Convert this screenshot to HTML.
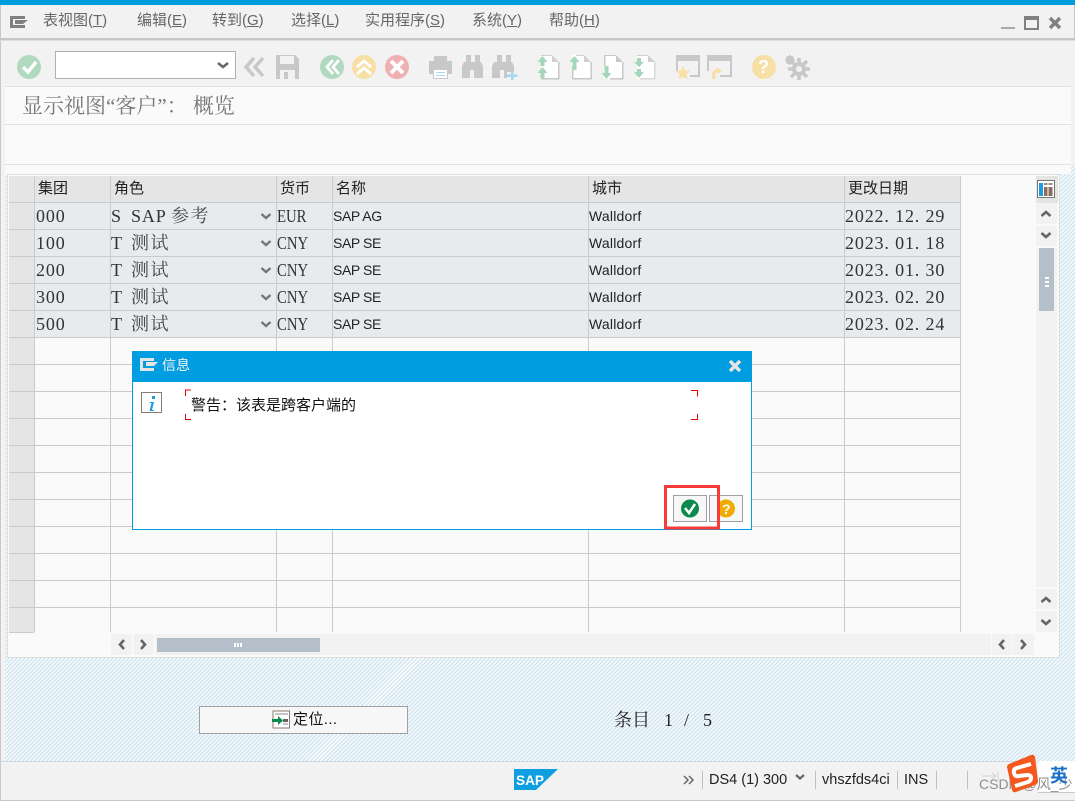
<!DOCTYPE html>
<html><head><meta charset="utf-8"><style>
html,body{margin:0;padding:0;background:#f2f2f2}
#p{position:relative;width:1075px;height:801px;overflow:hidden;background:#f2f2f2;font-family:"Liberation Sans","Noto Sans CJK SC",sans-serif}
.a{position:absolute}
.t{position:absolute;white-space:pre;line-height:20px}
.m{font:15px/20px "Liberation Sans","WenQuanYi Zen Hei","Noto Sans CJK SC",sans-serif;color:#666;top:11px}
.m u{text-decoration:underline}
.h{font:15px/20px "Liberation Sans","Noto Sans CJK SC",sans-serif;color:#222;top:179px}
.s{font:18px/20px "Liberation Serif","Noto Serif CJK SC",serif;color:#333;letter-spacing:.85px}
.c{font:18px/20px "Liberation Serif","Noto Serif CJK SC",serif;color:#333;left:277px;transform:scaleX(.82);transform-origin:left center}
.z{font:18px/20px "Liberation Serif","Noto Serif CJK SC",serif;color:#444;letter-spacing:1.5px;left:131px}
.l{font:14px/20px "Liberation Sans",sans-serif;color:#222;left:333px;letter-spacing:-.4px}
.w{font:14px/20px "Liberation Sans",sans-serif;color:#222;left:589px;letter-spacing:.2px}
.st{font:14.500px/20px "Liberation Sans",sans-serif;color:#222;top:770px}
svg{position:absolute;left:0;top:0}
</style></head><body><div id="p">
<div class="a" style="left:0;top:0;width:1075px;height:5px;background:#009de0"></div>
<div class="a" style="left:0;top:5px;width:1px;height:796px;background:#c8c8c8"></div>
<div class="a" style="left:1074px;top:5px;width:1px;height:36px;background:#c8c8c8"></div>
<div class="a" style="left:0;top:38px;width:1075px;height:2px;background:#c6c6c6"></div>
<div class="a" style="left:0;top:40px;width:1075px;height:1px;background:#dedede"></div>
<div class="a" style="left:5px;top:86px;width:1066px;height:79px;background:#fafafa;border-top:1px solid #e2e2e2;border-bottom:1px solid #e2e2e2;box-sizing:border-box"></div>
<div class="a" style="left:5px;top:124px;width:1066px;height:1px;background:#e2e2e2"></div>
<div class="a" style="left:5px;top:165px;width:1070px;height:596px;background:repeating-linear-gradient(135deg,#cfe6f5 0,#cfe6f5 1.41px,#fafafa 1.41px,#fafafa 2.83px)"></div>
<div class="a" style="left:5px;top:165px;width:1066px;height:9px;background:#fafafa"></div>
<div class="a" style="left:7px;top:174px;width:1053px;height:484px;background:#fafafa;border:1px solid #dedede;box-sizing:border-box"></div>
<div class="a" style="left:0;top:761px;width:1075px;height:1px;background:#cfd8de"></div>
<div class="a" style="left:0;top:800px;width:1075px;height:1px;background:#c8c8c8"></div>

<div class="a" style="left:9px;top:176px;width:951px;height:26px;background:#e5e5e5"></div>
<div class="a" style="left:9px;top:203px;width:25px;height:429px;background:#e5e5e5"></div>
<div class="a" style="left:35px;top:203px;width:925px;height:134px;background:#e8ebee"></div>

<svg width="1075" height="801" viewBox="0 0 1075 801">
<g stroke="#cbcbcb" stroke-width="1" shape-rendering="crispEdges">
<path d="M9 202.5H961M9 229.5H961M9 256.5H961M9 283.5H961M9 310.5H961M9 337.5H961M9 364.5H961M9 391.5H961M9 418.5H961M9 445.5H961M9 472.5H961M9 499.5H961M9 526.5H961M9 553.5H961M9 580.5H961M9 607.5H961"/>
<path d="M34.5 176V632M110.5 176V632M276.5 176V632M332.5 176V632M588.5 176V632M844.5 176V632M960.5 176V632"/>
<path d="M9 632.5H34"/>
</g>
<rect x="1036" y="176" width="21" height="456" fill="#f2f2f2"/>
<rect x="1036" y="176" width="22" height="27" fill="#e4e4e4"/>
<rect x="1037.500" y="180.500" width="17" height="17" fill="#fff" stroke="#777"/>
<path d="M1039 183h4v13h-4z" fill="#1b9be0"/><path d="M1044 187h3.500v9h-3.500zM1048.500 187h4v9h-4z" fill="#8a6d5f"/>
<path d="M1044 183h3.500v2h-3.500zM1048.500 183h4v2h-4z" fill="#a08a7c"/>
<path d="M1036 225h21M1036 247h21" stroke="#fafafa" stroke-width="2"/>
<rect x="1039" y="248" width="15" height="63" fill="#b5bfca"/>
<path d="M1045 277h4v2h-4zM1045 281h4v2h-4zM1045 285h4v2h-4z" fill="#fff"/>
<path d="M1036 588h21M1036 610h21" stroke="#fafafa" stroke-width="2"/>
<g fill="none" stroke="#666" stroke-width="2.600">
<path d="M1041.500 216l4.500-4 4.500 4M1041.500 233l4.500 4 4.500-4M1041.500 602l4.500-4 4.500 4M1041.500 620l4.500 4 4.500-4"/>
</g>
<rect x="111" y="634" width="880" height="21" fill="#f2f2f2"/>
<path d="M132.500 634v21M154.500 634v21" stroke="#fafafa" stroke-width="2"/>
<rect x="992" y="634" width="20" height="21" fill="#f2f2f2"/><rect x="1013" y="634" width="21" height="21" fill="#f2f2f2"/>
<g fill="none" stroke="#666" stroke-width="2.600">
<path d="M124 640l-4 4.500 4 4.500M141 640l4 4.500-4 4.500M1004 640l-4 4.500 4 4.500M1021 640l4 4.500-4 4.500"/>
</g>
<rect x="157" y="638" width="163" height="14" fill="#b5bfca"/>
<path d="M234 643h2v4h-2zM237 643h2v4h-2zM240 643h2v4h-2z" fill="#fff"/>
<g fill="none" stroke="#777" stroke-width="2.400">
<path d="M261.500 214l4.500 4 4.500-4M261.500 241l4.500 4 4.500-4M261.500 268l4.500 4 4.500-4M261.500 295l4.500 4 4.500-4M261.500 322l4.500 4 4.500-4"/></g>

<path d="M10 16h15v3H13v6h12v3H10z" fill="#808080"/><path d="M15 20h13l-5 4h-8z" fill="#808080"/>
<path d="M1001 27h14v2h-14z" fill="#aaa"/>
<rect x="1025" y="17" width="13" height="12" fill="none" stroke="#808080" stroke-width="2"/><rect x="1025" y="16" width="13" height="4" fill="#808080"/>
<path d="M1050 18l10 10M1060 18l-10 10" stroke="#808080" stroke-width="3.400" fill="none"/>

<circle cx="29" cy="67" r="12" fill="#b0d9c0"/><path d="M23 67l5 5 8-10" fill="none" stroke="#fff" stroke-width="3.500"/>
<rect x="55.500" y="51.500" width="180" height="27" fill="#fff" stroke="#b0b0b0"/>
<path d="M218 63l5 4 5-4" fill="none" stroke="#666" stroke-width="2.500"/>
<path d="M254 58l-8 9 8 9M263 58l-8 9 8 9" fill="none" stroke="#c8c8c8" stroke-width="3.500"/>
<path d="M276 55h19l4 4v20h-23z" fill="#c8c8c8"/><rect x="280" y="56" width="14" height="8" fill="#f2f2f2"/><rect x="280" y="70" width="15" height="9" fill="#f2f2f2"/><rect x="284" y="72" width="4" height="7" fill="#c8c8c8"/>
<circle cx="332" cy="67" r="12" fill="#b0d9c0"/><path d="M333 60l-6 7 6 7M339 60l-6 7 6 7" fill="none" stroke="#fff" stroke-width="2.800"/>
<circle cx="364" cy="67" r="12" fill="#f8dfa6"/><path d="M357 67l7-6 7 6M357 74l7-6 7 6" fill="none" stroke="#fff" stroke-width="2.800"/>
<circle cx="397" cy="67" r="12" fill="#eeb0b0"/><path d="M391 61l12 12M403 61l-12 12" fill="none" stroke="#fff" stroke-width="4"/>
<path d="M434 56h13v5h-13zM429 61h23v13h-5v-4h-13v4h-5z" fill="#c8c8c8"/><rect x="433.500" y="69.500" width="14" height="9" fill="#fff" stroke="#c8c8c8"/><path d="M436 72.500h9M436 75.500h9" stroke="#a8d8f0"/><path d="M446 63h5v2h-5z" fill="#a8d8f0"/>
<path d="M466 55h5v7h4v-7h5v7h1l2 4v12h-9v-8h-4v8h-8V66l2-4h2z" fill="#c8c8c8"/>
<path d="M497 55h5v7h4v-7h5v7h1l2 4v6h-7v6h-3v-8h-4v8h-8V66l2-4h3z" fill="#c8c8c8"/>
<path d="M511 71h2.500v3.500h4v2.500h-4v3h-2.500v-3h-4v-2.500h4z" fill="#a8d8f0"/>

<path d="M541 55h11l7 7v17h-18z" fill="#fff"/><path d="M541 55h11v1h-11zM552 55l7 7h-7z" fill="#d0d0d0"/><path d="M558 62h1.500v17.500H541V78h17z" fill="#c8c8c8"/>
<path d="M572 55h12l7 7v17h-19z" fill="#fff"/><path d="M584 55l7 7h-7z" fill="#d0d0d0"/><path d="M572 66h1.500v12h17V62h1.500v17.500h-20z" fill="#c8c8c8"/><path d="M576 55h8v1h-8z" fill="#d0d0d0"/>
<path d="M604 55h12l7 7v17h-19z" fill="#fff"/><path d="M604 55h12v1h-10.500v10H604zM616 55l7 7h-7z" fill="#c8c8c8"/><path d="M622 62h1.500v17.500H610V78h12z" fill="#c8c8c8"/>
<path d="M637 55h11l7 7v17h-18z" fill="#fff"/><path d="M637 55h11v1h-11zM648 55l7 7h-7z" fill="#d0d0d0"/><path d="M654 62h1.500v17.500H640V78h14z" fill="#d8d8d8"/>
<path d="M542.500 56l5 6h-3v4h-4v-4h-3zM542.500 67l5 6h-3v5h-4v-5h-3zM574.500 56l5 6h-3v8h-4v-8h-3zM606.500 79l5-6h-3v-7h-4v7h-3zM637 58h4v4h3l-5 5-5-5h3zM637 69h4v3h3l-5 6-5-6h3z" fill="#a5d6ba"/>
<rect x="676" y="55" width="24" height="6" fill="#c8c8c8"/><path d="M676 55h2v16h-2zM690 77h10V58h-2v17h-8z" fill="#c8c8c8"/>
<path d="M683 66l2 4.500 5 .5-3.700 3.300 1 5-4.300-2.500-4.300 2.500 1-5-3.700-3.300 5-.5z" fill="#f8dfa6"/>
<rect x="707" y="55" width="25" height="6" fill="#c8c8c8"/><path d="M707 55h2v16h-2zM720 77h12V58h-2v17h-10z" fill="#c8c8c8"/>
<path d="M712 79c-1-6 1-10 5-10v-2l5 4-5 3v-2c-2 0-2 3-1 7z" fill="#f8dfa6"/>
<circle cx="764" cy="67" r="12" fill="#f8dfa6"/>
<path d="M799 58v22M788 69h22M791 61l16 16M807 61l-16 16" stroke="#c8c8c8" stroke-width="3.500"/><circle cx="799" cy="69" r="7" fill="#c8c8c8"/><circle cx="799" cy="69" r="3" fill="#f2f2f2"/>
<circle cx="790" cy="60" r="3" fill="none" stroke="#c8c8c8" stroke-width="2.500"/><path d="M790 55v10M785 60h10M786.500 56.500l7 7M793.500 56.500l-7 7" stroke="#c8c8c8" stroke-width="1.500"/>
</svg>

<span class="t m" style="left:43px">表视图(<u>T</u>)</span>
<span class="t m" style="left:137px">编辑(<u>E</u>)</span>
<span class="t m" style="left:212px">转到(<u>G</u>)</span>
<span class="t m" style="left:291px">选择(<u>L</u>)</span>
<span class="t m" style="left:365px">实用程序(<u>S</u>)</span>
<span class="t m" style="left:472px">系统(<u>Y</u>)</span>
<span class="t m" style="left:549px">帮助(<u>H</u>)</span>
<span class="t" style="left:22px;top:95px;font:21px/22px 'Liberation Serif','Noto Serif CJK SC',serif;color:#777">显示视图“客户”： 概览</span>
<span class="t" style="left:758px;top:57px;font:bold 18px/20px 'Liberation Sans',sans-serif;color:#fff">?</span>

<span class="t h" style="left:38px">集团</span>
<span class="t h" style="left:114px">角色</span>
<span class="t h" style="left:280px">货币</span>
<span class="t h" style="left:336px">名称</span>
<span class="t h" style="left:592px">城市</span>
<span class="t h" style="left:848px">更改日期</span>

<span class="t s" style="left:36px;top:206px">000</span><span class="t s" style="left:111px;top:206px">S</span><span class="t s" style="left:131px;top:206px">SAP</span><span class="t z" style="left:171px;top:206px">参考</span><span class="t c" style="top:206px">EUR</span><span class="t l" style="top:206px">SAP AG</span><span class="t w" style="top:206px">Walldorf</span><span class="t s" style="left:845px;top:206px">2022. 12. 29</span>
<span class="t s" style="left:36px;top:233px">100</span><span class="t s" style="left:111px;top:233px">T</span><span class="t z" style="top:233px">测试</span><span class="t c" style="top:233px">CNY</span><span class="t l" style="top:233px">SAP SE</span><span class="t w" style="top:233px">Walldorf</span><span class="t s" style="left:845px;top:233px">2023. 01. 18</span>
<span class="t s" style="left:36px;top:260px">200</span><span class="t s" style="left:111px;top:260px">T</span><span class="t z" style="top:260px">测试</span><span class="t c" style="top:260px">CNY</span><span class="t l" style="top:260px">SAP SE</span><span class="t w" style="top:260px">Walldorf</span><span class="t s" style="left:845px;top:260px">2023. 01. 30</span>
<span class="t s" style="left:36px;top:287px">300</span><span class="t s" style="left:111px;top:287px">T</span><span class="t z" style="top:287px">测试</span><span class="t c" style="top:287px">CNY</span><span class="t l" style="top:287px">SAP SE</span><span class="t w" style="top:287px">Walldorf</span><span class="t s" style="left:845px;top:287px">2023. 02. 20</span>
<span class="t s" style="left:36px;top:314px">500</span><span class="t s" style="left:111px;top:314px">T</span><span class="t z" style="top:314px">测试</span><span class="t c" style="top:314px">CNY</span><span class="t l" style="top:314px">SAP SE</span><span class="t w" style="top:314px">Walldorf</span><span class="t s" style="left:845px;top:314px">2023. 02. 24</span>

<div class="a" style="left:132px;top:351px;width:620px;height:179px;background:#fff;border:1px solid #009de0;box-sizing:border-box"></div>
<div class="a" style="left:132px;top:351px;width:620px;height:31px;background:#009de0"></div>
<span class="t" style="left:162px;top:355px;font:14px/20px 'Liberation Sans','Noto Sans CJK SC',sans-serif;color:#f2f2f2">信息</span>
<span class="t" style="left:191px;top:396px;font:15px/20px 'Liberation Sans','Noto Sans CJK SC',sans-serif;color:#111">警告：该表是跨客户端的</span>
<div class="a" style="left:199px;top:706px;width:209px;height:28px;background:#f7f7f7;border:1px solid #a0a0a0;box-sizing:border-box"></div>
<span class="t" style="left:293px;top:710px;font:15px/20px 'Liberation Sans','Noto Sans CJK SC',sans-serif;color:#111;letter-spacing:.4px">定位...</span>
<span class="t" style="left:614px;top:710px;font:18px/20px 'Liberation Serif','Noto Serif CJK SC',serif;color:#222">条目</span>
<span class="t" style="left:664px;top:710px;font:18px/20px 'Liberation Serif',serif;color:#222">1</span>
<span class="t" style="left:684px;top:710px;font:18px/20px 'Liberation Serif',serif;color:#222">/</span>
<span class="t" style="left:703px;top:710px;font:18px/20px 'Liberation Serif',serif;color:#222">5</span>

<svg width="1075" height="801" viewBox="0 0 1075 801">
<path d="M140 358h14v3h-11v7h11v3h-14z" fill="#e4e4e4"/><path d="M146 362h12l-4 4h-8z" fill="#e4e4e4"/>
<path d="M730 361l10 10M740 361l-10 10" stroke="#e4e4e4" stroke-width="3.500" fill="none"/>
<rect x="141.500" y="392.500" width="20" height="20" fill="#fff" stroke="#8a7a70"/>
<path d="M152 396h3v3h-3zM150 402h4l-2 8h2l-.5 1h-4l2-8h-2z" fill="#1b9be0"/>
<g fill="none" stroke="#e00000" stroke-width="1" shape-rendering="crispEdges">
<path d="M185.500 396v-6H191M185.500 414v5.500H191"/><path d="M691 390.500h6.500v6M691 419.500h6.500V414"/></g>
<rect x="673.500" y="495.500" width="33" height="26" fill="#f7f7f7" stroke="#a0a0a0"/>
<rect x="709.500" y="495.500" width="33" height="26" fill="#f7f7f7" stroke="#a0a0a0"/>
<circle cx="690" cy="508.500" r="9" fill="#0a8a4c"/><path d="M685 508l4 5 6-9" fill="none" stroke="#fff" stroke-width="2.500"/>
<circle cx="726" cy="508.500" r="9" fill="#f0ab00"/>
<text x="722" y="514" font-family="Liberation Sans" font-weight="bold" font-size="14" fill="#fff">?</text>
<rect x="665.500" y="486.500" width="53" height="41.500" fill="none" stroke="#f93a3a" stroke-width="3"/>

<rect x="273" y="711" width="16.500" height="17" fill="#fff" stroke="#8a7a70"/>
<path d="M275 714h13M283 724h5" stroke="#888"/><rect x="283" y="719" width="5" height="3" fill="#666"/>
<path d="M272 719h6v-3l5 4.500-5 4.500v-3h-6z" fill="#0a8a4c"/>

<path d="M514 769h44l-22 21h-22z" fill="#0f9ee0"/>
<text x="516" y="785" font-family="Liberation Sans" font-weight="bold" font-size="14" fill="#fff" textLength="28" lengthAdjust="spacingAndGlyphs">SAP</text>
<path d="M684 776l4 4-4 4M689 776l4 4-4 4" fill="none" stroke="#666" stroke-width="1.500"/>
<path d="M702.500 771v18M815.500 771v18M897.500 771v18M936.500 771v18M967.500 771v18" stroke="#c0c0c0"/>
<path d="M796 775l4 3.500 4-3.500" fill="none" stroke="#666" stroke-width="2.200"/>
<path d="M982 776h14M992 773l4 3-4 3M998 772v8" fill="none" stroke="#d4d4d4"/>
<rect x="1038" y="761" width="37" height="31" fill="#fff"/>
<path d="M1038 792.500h37" stroke="#c8c8c8"/>
</svg>
<span class="t st" style="left:709px">DS4 (1) 300</span>
<span class="t st" style="left:822px">vhszfds4ci</span>
<span class="t st" style="left:904px">INS</span>
<span class="t" style="left:979px;top:774px;font:14px/20px 'Liberation Sans','Noto Sans CJK SC',sans-serif;color:#8f8f8f">CSDN @风_少</span>
<svg width="1075" height="801" viewBox="0 0 1075 801">
<path d="M1009 764L1031 755q3-1 4 2L1038 781q0 3-3 4L1016 792q-3 1-4-2L1007 767q0-2 2-3z" fill="#f4581c"/>
<path d="M1031 764L1017 768q-4 1-3 5t5 3l8-1q4 0 4 3t-3 4L1015 786" fill="none" stroke="#fff" stroke-width="4"/>
</svg>
<span class="t" style="left:1050px;top:766px;font:bold 18px/20px 'Liberation Sans','Noto Sans CJK SC',sans-serif;color:#1a6fc4">英</span>
</div></body></html>
